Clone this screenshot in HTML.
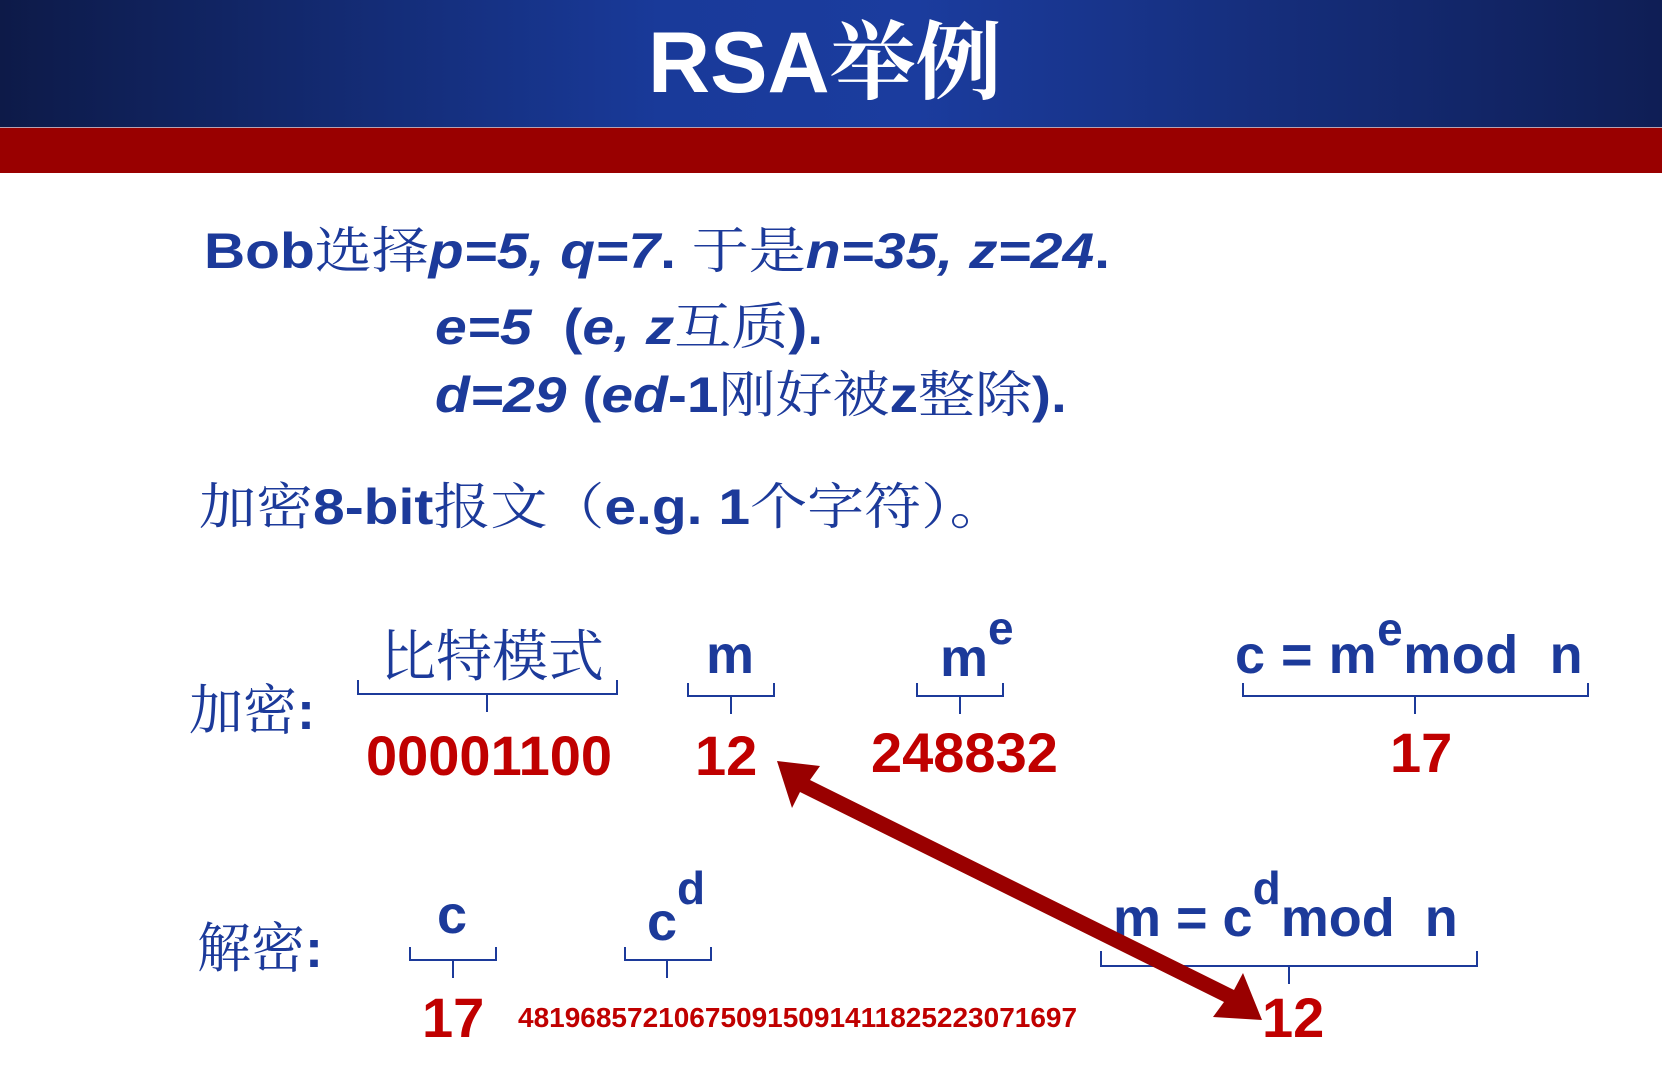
<!DOCTYPE html>
<html><head><meta charset="utf-8"><style>
html,body{margin:0;padding:0}
body{width:1662px;height:1066px;position:relative;overflow:hidden;background:#fff;font-family:"Liberation Sans","Noto Sans CJK SC",sans-serif}
.hdr{position:absolute;left:0;top:0;width:1662px;height:127px;background:linear-gradient(90deg,#0d1a48 0%,#193a9a 40%,#1b3c9e 55%,#0f1e55 100%)}
.red{position:absolute;left:0;top:127px;width:1662px;height:45px;background:#990000;border-top:1px solid #b8a0b0}
.t{position:absolute;white-space:nowrap;line-height:1}
.w{transform-origin:0 0;transform:scaleX(1.14)}
.b{color:#1c3a9a;font-weight:bold}
.r{color:#c00000;font-weight:bold}
.cj{font-family:"Noto Serif CJK SC","Liberation Serif",serif;font-weight:normal;color:#1c3a9a}
i{font-style:italic}
sup{line-height:0}
</style></head><body>
<div class="hdr"></div><div class="red"></div>
<div class="t" style="left:648px;top:12px;font-size:86px;font-weight:bold;color:#fff">RSA<span style="font-family:'Noto Serif CJK SC',serif">举例</span></div>

<div class="t b w" style="left:204px;top:222px;font-size:50px">Bob<span class="cj">选择</span><i>p=5, q=7</i>.&nbsp;<span class="cj">于是</span><i>n=35, z=24</i>.</div>
<div class="t b w" style="left:435px;top:298px;font-size:50px"><i>e=5</i>&nbsp; (<i>e, z</i><span class="cj">互质</span>).</div>
<div class="t b w" style="left:435px;top:366px;font-size:50px"><i>d=29</i> (<i>ed</i>-1<span class="cj">刚好被</span>z<span class="cj">整除</span>).</div>
<div class="t b w" style="left:199px;top:478px;font-size:50px"><span class="cj">加密</span>8-bit<span class="cj">报文（</span>e.g. 1<span class="cj">个字符）。</span></div>

<div class="t cj" style="left:189px;top:680px;font-size:54px">加密<b style="font-family:'Liberation Sans'">:</b></div>
<div class="t cj" style="left:380px;top:625px;font-size:56px">比特模式</div>
<div class="t b" style="left:706px;top:628px;font-size:54px">m</div>
<div class="t b" style="left:940px;top:628px;font-size:54px">m<sup style="font-size:46px;vertical-align:32px">e</sup></div>
<div class="t b" style="left:1235px;top:628px;font-size:54px;letter-spacing:0.5px">c = m<sup style="font-size:46px;vertical-align:28px">e</sup>mod&nbsp; n</div>

<div class="t r" style="left:366px;top:728px;font-size:56px">00001100</div>
<div class="t r" style="left:695px;top:728px;font-size:56px">12</div>
<div class="t r" style="left:871px;top:725px;font-size:56px">248832</div>
<div class="t r" style="left:1390px;top:725px;font-size:56px">17</div>

<div class="t cj" style="left:197px;top:918px;font-size:54px">解密<b style="font-family:'Liberation Sans'">:</b></div>
<div class="t b" style="left:437px;top:888px;font-size:54px">c</div>
<div class="t b" style="left:647px;top:888px;font-size:54px">c<sup style="font-size:46px;vertical-align:36px">d</sup></div>
<div class="t b" style="left:1113px;top:888px;font-size:54px">m = c<sup style="font-size:46px;vertical-align:32px">d</sup>mod&nbsp; n</div>

<div class="t r" style="left:422px;top:990px;font-size:56px">17</div>
<div class="t r" style="left:518px;top:1004px;font-size:28px;letter-spacing:0px">481968572106750915091411825223071697</div>
<div class="t r" style="left:1262px;top:990px;font-size:56px">12</div>

<svg width="1662" height="1066" style="position:absolute;left:0;top:0" fill="none" stroke="#1c3a9a" stroke-width="2">
<path d="M358 680 v14 h259 v-14 M487 694 v18"/>
<path d="M688 683 v13 h86 v-13 M731 696 v18"/>
<path d="M917 683 v13 h86 v-13 M960 696 v18"/>
<path d="M1243 683 v13 h345 v-13 M1415 696 v18"/>
<path d="M410 947 v13 h86 v-13 M453 960 v18"/>
<path d="M625 947 v13 h86 v-13 M667 960 v18"/>
<path d="M1101 951 v15 h376 v-15 M1289 966 v18"/>
<g stroke="none" fill="#990000">
<path d="M777 761 L820 766 L810 780 L1234 990 L1243 973 L1262 1020 L1213 1017 L1224 1002 L800 792 L792 808 Z"/>
</g>
</svg>
</body></html>
